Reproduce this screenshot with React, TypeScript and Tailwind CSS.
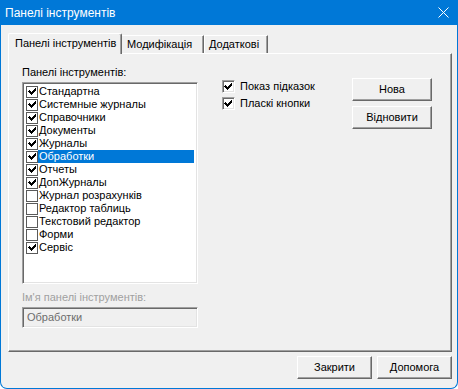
import React from "react";

const items: [string, boolean][] = [
  ["Стандартна", true],
  ["Системные журналы", true],
  ["Справочники", true],
  ["Документы", true],
  ["Журналы", true],
  ["Обработки", true],
  ["Отчеты", true],
  ["ДопЖурналы", true],
  ["Журнал розрахунків", false],
  ["Редактор таблиць", false],
  ["Текстовий редактор", false],
  ["Форми", false],
  ["Сервіс", true],
];

const Check = () => (
  <svg width="9" height="9" viewBox="0 0 9 9" shapeRendering="crispEdges">
    <path
      d="M1 3h1v1h1v1h1v-1h1v-1h1v-1h1v-1h1v3h-1v1h-1v1h-1v1h-1v1h-1v-1h-1v-1h-1v-1h-1z"
      fill="#000"
    />
  </svg>
);

function Button({ label, w }: { label: string; w: string }) {
  return (
    <div
      className={`${w} h-[23px] flex items-center justify-center bg-[#f0f0f0] border-t border-l border-t-white border-l-white border-r border-b border-r-[#696969] border-b-[#696969] shadow-[inset_-1px_-1px_0_#a0a0a0] text-black text-[11px] leading-none`}
    >
      {label}
    </div>
  );
}

function SideCheck({ label }: { label: string }) {
  return (
    <div className="h-[17px] flex items-center">
      <div className="w-[13px] h-[13px] bg-white border-t border-l border-t-[#a0a0a0] border-l-[#a0a0a0] border-r border-b border-r-white border-b-white shadow-[inset_1px_1px_0_#696969,inset_-1px_-1px_0_#e3e3e3] flex items-center justify-center">
        <Check />
      </div>
      <span className="ml-[5px] text-[11px] leading-[13px] text-black">{label}</span>
    </div>
  );
}

export default function App() {
  return (
    <div className="w-[458px] h-[389px] flex flex-col bg-[#f0f0f0] border-x border-b border-[#0078d7] rounded-b-[7px] overflow-hidden font-['Liberation_Sans',Arial,sans-serif] text-[11px] text-black">
      <div className="h-[25px] shrink-0 bg-[#0078d7] flex items-center justify-between pl-[4px] pr-[8px]">
        <span className="text-white text-[12px] leading-none font-['Liberation_Sans',Arial,sans-serif]">Панелі інструментів</span>
        <svg width="11" height="11" viewBox="0 0 11 11">
          <path d="M0.5 0.5L10.5 10.5M10.5 0.5L0.5 10.5" stroke="#fff" strokeWidth="1" />
        </svg>
      </div>

      <div className="flex flex-col pl-[7px] pt-[8px]">
        <div className="relative z-10 flex items-end h-[21px] -mb-px">
          <div className="w-[114px] h-[21px] bg-[#f0f0f0] border-t border-l border-t-white border-l-white border-r border-r-[#696969] shadow-[inset_-1px_0_0_#a0a0a0] pl-[6px] pt-[3px] leading-[13px] rounded-t-[2px]">
            Панелі інструментів
          </div>
          <div className="w-[82px] h-[18px] mb-px bg-[#f0f0f0] border-t border-t-white border-r border-r-[#696969] shadow-[inset_-1px_0_0_#a0a0a0] pl-[5px] pt-[2px] leading-[13px]">
            Модифікація
          </div>
          <div className="w-[64px] h-[18px] mb-px bg-[#f0f0f0] border-t border-l border-t-white border-l-white border-r border-r-[#696969] shadow-[inset_-1px_0_0_#a0a0a0] pl-[4px] pt-[2px] leading-[13px]">
            Додаткові
          </div>
        </div>

        <div className="w-[444px] h-[299px] bg-[#f0f0f0] border-t border-l border-t-white border-l-white border-r border-b border-r-[#696969] border-b-[#696969] shadow-[inset_-1px_-1px_0_#a0a0a0] flex pl-[13px] pt-[12px]">
          <div className="w-[176px] flex flex-col">
            <div className="h-[13px] leading-[13px] mb-[3px]">Панелі інструментів:</div>
            <div className="h-[202px] bg-white border-t border-l border-t-[#a0a0a0] border-l-[#a0a0a0] border-r border-b border-r-white border-b-white shadow-[inset_1px_1px_0_#696969,inset_-1px_-1px_0_#e3e3e3] pt-[2px] pl-[2px] pr-[2px]">
              {items.map(([label, checked], i) => {
                const sel = i === 5;
                return (
                  <div key={label} className="h-[13px] flex items-center">
                    <div className="ml-[1px] w-[12px] h-[12px] border border-[#5a5a5a] bg-white flex items-center justify-center shrink-0">
                      {checked && <Check />}
                    </div>
                    <div
                      className={`flex-1 h-[13px] leading-[13px] pl-[1px] mr-[1px] ${
                        sel ? "bg-[#0078d7] text-white" : ""
                      }`}
                    >
                      {label}
                    </div>
                  </div>
                );
              })}
            </div>
            <div className="h-[13px] leading-[13px] mt-[7px] text-[#a0a0a0]">Ім'я панелі інструментів:</div>
            <div className="h-[21px] mt-[3px] bg-[#f0f0f0] border-t border-l border-t-[#a0a0a0] border-l-[#a0a0a0] border-r border-b border-r-white border-b-white shadow-[inset_1px_1px_0_#696969,inset_-1px_-1px_0_#e3e3e3] pl-[4px] flex items-center text-[#6d6d6d]">
              Обработки
            </div>
          </div>

          <div className="ml-[24px] w-[130px] flex flex-col pt-[12px]">
            <SideCheck label="Показ підказок" />
            <SideCheck label="Пласкі кнопки" />
          </div>

          <div className="w-[80px] flex flex-col gap-[5px] pt-[12px]">
            <Button label="Нова" w="w-[80px]" />
            <Button label="Відновити" w="w-[80px]" />
          </div>
        </div>
      </div>

      <div className="flex justify-end gap-[5px] pr-[5px] mt-[4px]">
        <Button label="Закрити" w="w-[75px]" />
        <Button label="Допомога" w="w-[75px]" />
      </div>
    </div>
  );
}
